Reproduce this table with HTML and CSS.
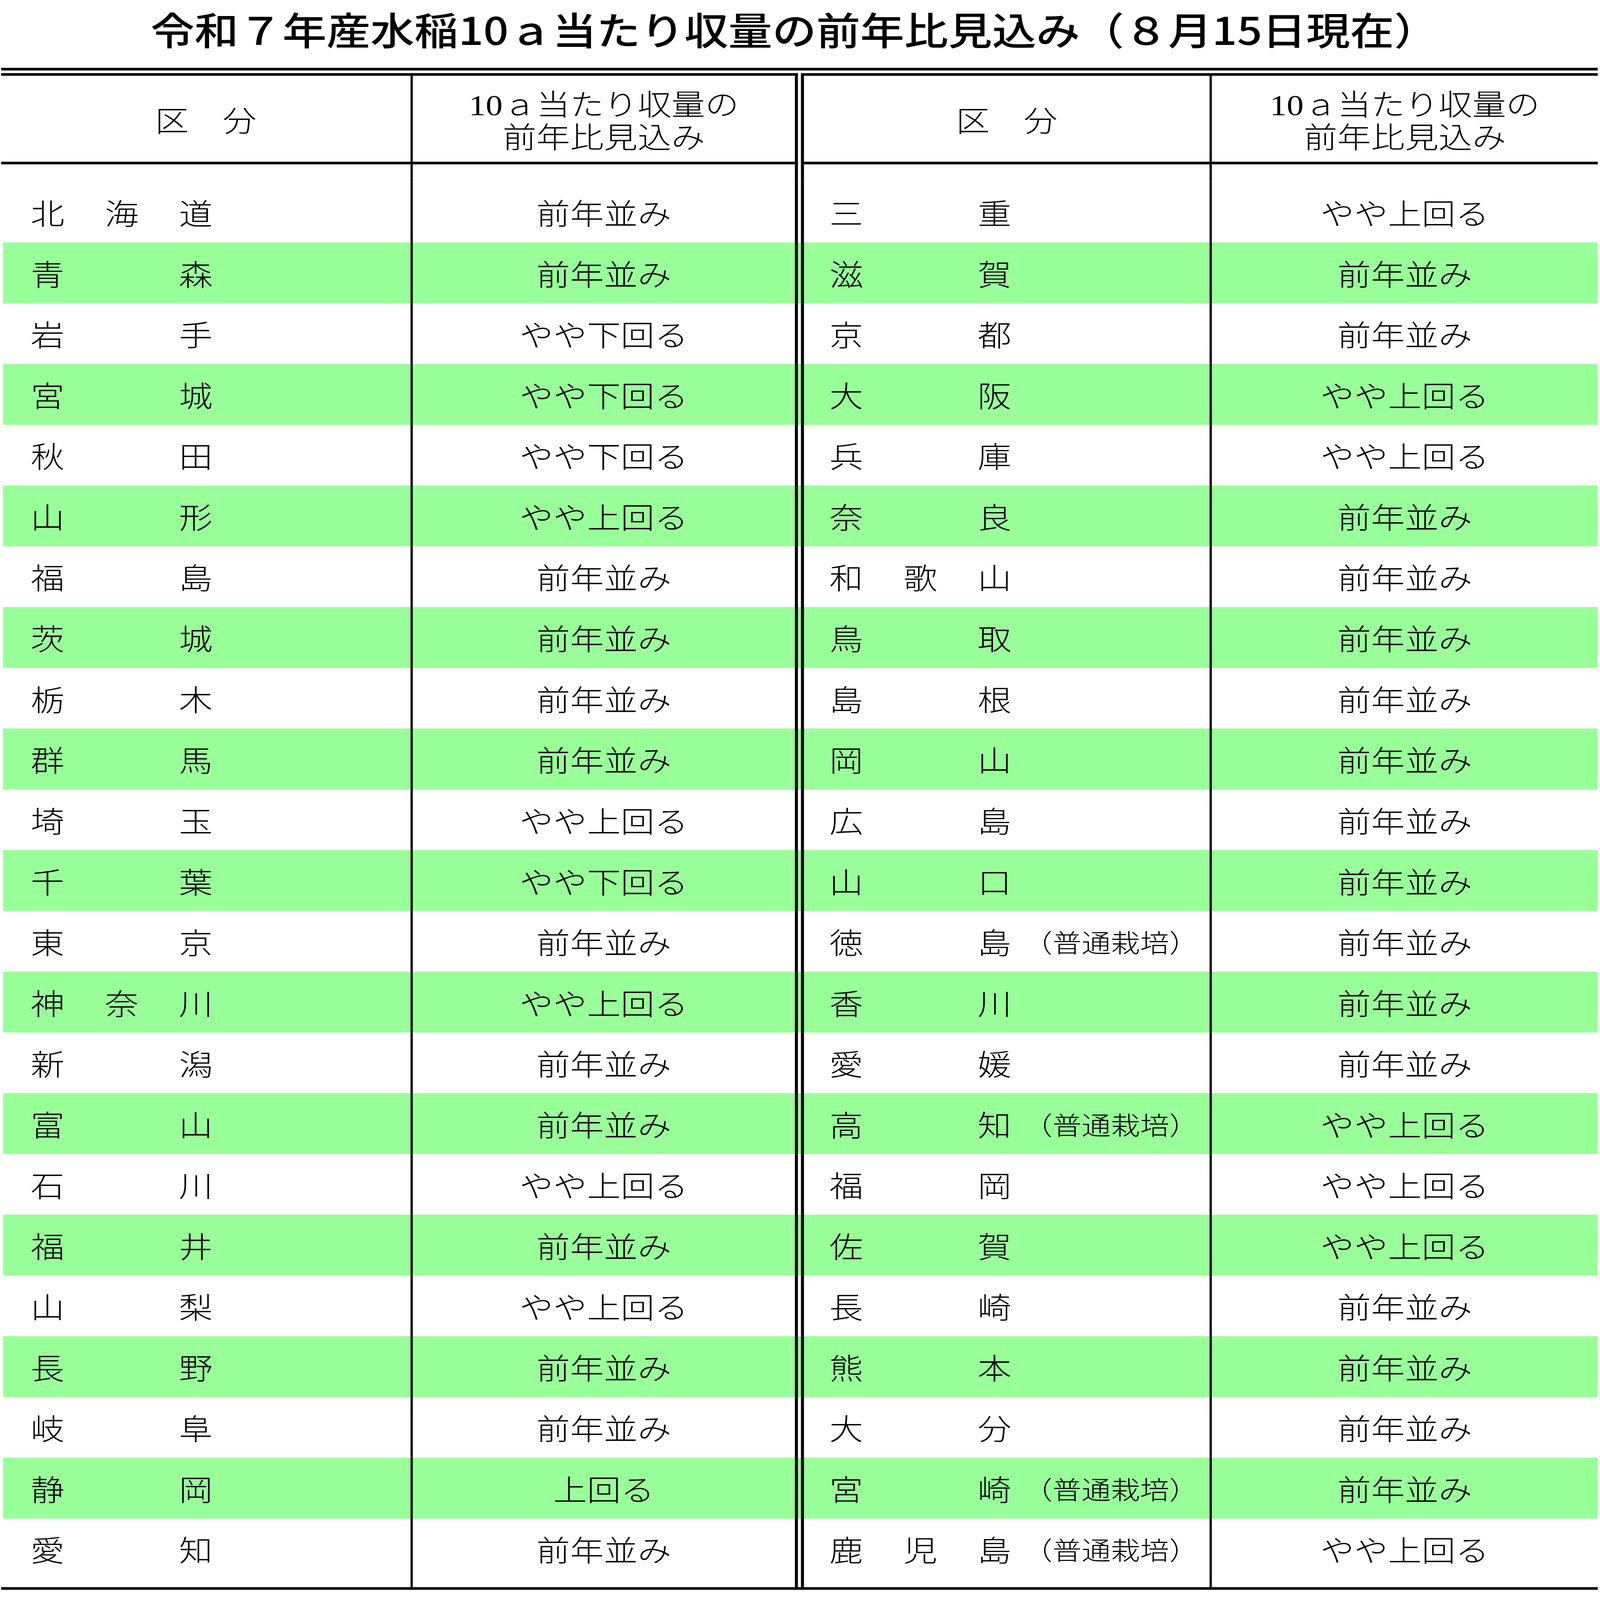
FILE: index.html
```html
<!DOCTYPE html>
<html lang="ja">
<head>
<meta charset="utf-8">
<title>令和７年産水稲10ａ当たり収量の前年比見込み</title>
<link rel="stylesheet" href="styles.css">
</head>
<body>
<main class="canvas">
<h1 class="title">令和７年産水稲10ａ当たり収量の前年比見込み（８月15日現在）</h1>
<div class="sheet">
  <div class="rule rule-top"></div>
  <div class="grid head">
    <div class="cell c1"><span class="htext">区　分</span></div>
    <div class="cell c2"><span class="htext"><span class="hline">10ａ当たり収量の</span><span class="hline">前年比見込み</span></span></div>
    <div class="cell gap"></div>
    <div class="cell c3"><span class="htext">区　分</span></div>
    <div class="cell c4"><span class="htext"><span class="hline">10ａ当たり収量の</span><span class="hline">前年比見込み</span></span></div>
  </div>
  <div class="grid spacer spacer-top">
    <div class="cell c1"></div><div class="cell c2"></div><div class="cell gap"></div><div class="cell c3"></div><div class="cell c4"></div>
  </div>

  <div class="grid row">
    <div class="cell c1"><span class="name"><span>北</span><span>海</span><span>道</span></span></div>
    <div class="cell c2 val">前年並み</div><div class="cell gap"></div>
    <div class="cell c3"><span class="name"><span>三</span><span>重</span></span></div>
    <div class="cell c4 val">やや上回る</div>
  </div>
  <div class="grid row alt">
    <div class="cell c1"><span class="name"><span>青</span><span>森</span></span></div>
    <div class="cell c2 val">前年並み</div><div class="cell gap"></div>
    <div class="cell c3"><span class="name"><span>滋</span><span>賀</span></span></div>
    <div class="cell c4 val">前年並み</div>
  </div>
  <div class="grid row">
    <div class="cell c1"><span class="name"><span>岩</span><span>手</span></span></div>
    <div class="cell c2 val">やや下回る</div><div class="cell gap"></div>
    <div class="cell c3"><span class="name"><span>京</span><span>都</span></span></div>
    <div class="cell c4 val">前年並み</div>
  </div>
  <div class="grid row alt">
    <div class="cell c1"><span class="name"><span>宮</span><span>城</span></span></div>
    <div class="cell c2 val">やや下回る</div><div class="cell gap"></div>
    <div class="cell c3"><span class="name"><span>大</span><span>阪</span></span></div>
    <div class="cell c4 val">やや上回る</div>
  </div>
  <div class="grid row">
    <div class="cell c1"><span class="name"><span>秋</span><span>田</span></span></div>
    <div class="cell c2 val">やや下回る</div><div class="cell gap"></div>
    <div class="cell c3"><span class="name"><span>兵</span><span>庫</span></span></div>
    <div class="cell c4 val">やや上回る</div>
  </div>
  <div class="grid row alt">
    <div class="cell c1"><span class="name"><span>山</span><span>形</span></span></div>
    <div class="cell c2 val">やや上回る</div><div class="cell gap"></div>
    <div class="cell c3"><span class="name"><span>奈</span><span>良</span></span></div>
    <div class="cell c4 val">前年並み</div>
  </div>
  <div class="grid row">
    <div class="cell c1"><span class="name"><span>福</span><span>島</span></span></div>
    <div class="cell c2 val">前年並み</div><div class="cell gap"></div>
    <div class="cell c3"><span class="name"><span>和</span><span>歌</span><span>山</span></span></div>
    <div class="cell c4 val">前年並み</div>
  </div>
  <div class="grid row alt">
    <div class="cell c1"><span class="name"><span>茨</span><span>城</span></span></div>
    <div class="cell c2 val">前年並み</div><div class="cell gap"></div>
    <div class="cell c3"><span class="name"><span>鳥</span><span>取</span></span></div>
    <div class="cell c4 val">前年並み</div>
  </div>
  <div class="grid row">
    <div class="cell c1"><span class="name"><span>栃</span><span>木</span></span></div>
    <div class="cell c2 val">前年並み</div><div class="cell gap"></div>
    <div class="cell c3"><span class="name"><span>島</span><span>根</span></span></div>
    <div class="cell c4 val">前年並み</div>
  </div>
  <div class="grid row alt">
    <div class="cell c1"><span class="name"><span>群</span><span>馬</span></span></div>
    <div class="cell c2 val">前年並み</div><div class="cell gap"></div>
    <div class="cell c3"><span class="name"><span>岡</span><span>山</span></span></div>
    <div class="cell c4 val">前年並み</div>
  </div>
  <div class="grid row">
    <div class="cell c1"><span class="name"><span>埼</span><span>玉</span></span></div>
    <div class="cell c2 val">やや上回る</div><div class="cell gap"></div>
    <div class="cell c3"><span class="name"><span>広</span><span>島</span></span></div>
    <div class="cell c4 val">前年並み</div>
  </div>
  <div class="grid row alt">
    <div class="cell c1"><span class="name"><span>千</span><span>葉</span></span></div>
    <div class="cell c2 val">やや下回る</div><div class="cell gap"></div>
    <div class="cell c3"><span class="name"><span>山</span><span>口</span></span></div>
    <div class="cell c4 val">前年並み</div>
  </div>
  <div class="grid row">
    <div class="cell c1"><span class="name"><span>東</span><span>京</span></span></div>
    <div class="cell c2 val">前年並み</div><div class="cell gap"></div>
    <div class="cell c3"><span class="name"><span>徳</span><span>島</span></span><span class="note">（普通栽培）</span></div>
    <div class="cell c4 val">前年並み</div>
  </div>
  <div class="grid row alt">
    <div class="cell c1"><span class="name"><span>神</span><span>奈</span><span>川</span></span></div>
    <div class="cell c2 val">やや上回る</div><div class="cell gap"></div>
    <div class="cell c3"><span class="name"><span>香</span><span>川</span></span></div>
    <div class="cell c4 val">前年並み</div>
  </div>
  <div class="grid row">
    <div class="cell c1"><span class="name"><span>新</span><span>潟</span></span></div>
    <div class="cell c2 val">前年並み</div><div class="cell gap"></div>
    <div class="cell c3"><span class="name"><span>愛</span><span>媛</span></span></div>
    <div class="cell c4 val">前年並み</div>
  </div>
  <div class="grid row alt">
    <div class="cell c1"><span class="name"><span>富</span><span>山</span></span></div>
    <div class="cell c2 val">前年並み</div><div class="cell gap"></div>
    <div class="cell c3"><span class="name"><span>高</span><span>知</span></span><span class="note">（普通栽培）</span></div>
    <div class="cell c4 val">やや上回る</div>
  </div>
  <div class="grid row">
    <div class="cell c1"><span class="name"><span>石</span><span>川</span></span></div>
    <div class="cell c2 val">やや上回る</div><div class="cell gap"></div>
    <div class="cell c3"><span class="name"><span>福</span><span>岡</span></span></div>
    <div class="cell c4 val">やや上回る</div>
  </div>
  <div class="grid row alt">
    <div class="cell c1"><span class="name"><span>福</span><span>井</span></span></div>
    <div class="cell c2 val">前年並み</div><div class="cell gap"></div>
    <div class="cell c3"><span class="name"><span>佐</span><span>賀</span></span></div>
    <div class="cell c4 val">やや上回る</div>
  </div>
  <div class="grid row">
    <div class="cell c1"><span class="name"><span>山</span><span>梨</span></span></div>
    <div class="cell c2 val">やや上回る</div><div class="cell gap"></div>
    <div class="cell c3"><span class="name"><span>長</span><span>崎</span></span></div>
    <div class="cell c4 val">前年並み</div>
  </div>
  <div class="grid row alt">
    <div class="cell c1"><span class="name"><span>長</span><span>野</span></span></div>
    <div class="cell c2 val">前年並み</div><div class="cell gap"></div>
    <div class="cell c3"><span class="name"><span>熊</span><span>本</span></span></div>
    <div class="cell c4 val">前年並み</div>
  </div>
  <div class="grid row">
    <div class="cell c1"><span class="name"><span>岐</span><span>阜</span></span></div>
    <div class="cell c2 val">前年並み</div><div class="cell gap"></div>
    <div class="cell c3"><span class="name"><span>大</span><span>分</span></span></div>
    <div class="cell c4 val">前年並み</div>
  </div>
  <div class="grid row alt">
    <div class="cell c1"><span class="name"><span>静</span><span>岡</span></span></div>
    <div class="cell c2 val">上回る</div><div class="cell gap"></div>
    <div class="cell c3"><span class="name"><span>宮</span><span>崎</span></span><span class="note">（普通栽培）</span></div>
    <div class="cell c4 val">前年並み</div>
  </div>
  <div class="grid row">
    <div class="cell c1"><span class="name"><span>愛</span><span>知</span></span></div>
    <div class="cell c2 val">前年並み</div><div class="cell gap"></div>
    <div class="cell c3"><span class="name"><span>鹿</span><span>児</span><span>島</span></span><span class="note">（普通栽培）</span></div>
    <div class="cell c4 val">やや上回る</div>
  </div>

  <div class="grid spacer spacer-bottom">
    <div class="cell c1"></div><div class="cell c2"></div><div class="cell gap"></div><div class="cell c3"></div><div class="cell c4"></div>
  </div>
  <div class="rule"></div>
</div>
</main>
<script src="fit.js"></script>
</body>
</html>
```

FILE: styles.css
```css
:root {
  --sx: 0.970386;
  --sy: 0.843145;
}

html, body {
  margin: 0;
  padding: 0;
  background: #ffffff;
  overflow: hidden;
}

body {
  width: 100vw;
  height: 100vh;
  color: #000000;
  font-family: "Noto Sans CJK JP", "Noto Sans", sans-serif;
}

/* the sheet is drawn on a 4221 x 4858 canvas and fitted to the window */
.canvas {
  display: block;
  width: 4221px;
  height: 4858px;
  overflow: hidden;
  transform-origin: 0 0;
  transform: scale(var(--sx), var(--sy));
}

.title {
  margin: 0;
  padding-top: 27px;
  height: 116px;
  font-size: 116px;
  line-height: 116px;
  font-weight: 500;
  text-align: center;
  white-space: nowrap;
  padding-right: 30px;
}

.sheet {
  margin: 63px 6px 0 3px;
}

.rule {
  height: 8px;
  background: #000000;
}

.rule-top {
  margin-bottom: 8px;
}

.grid {
  display: grid;
  grid-template-columns: 1086px 1016px 8px 1084px 1018px;
}

.cell {
  box-sizing: border-box;
  min-width: 0;
}

.c1 {
  border-right: 6px solid #000000;
}

.c2 {
  border-right: 8px solid #000000;
}

.c3 {
  border-left: 8px solid #000000;
  border-right: 6px solid #000000;
}

.head .cell {
  height: 277px;
  display: flex;
  align-items: center;
  justify-content: center;
  text-align: center;
  font-family: "Liberation Serif", "Noto Sans CJK JP", serif;
  font-size: 89px;
  line-height: 100px;
  font-weight: 300;
  white-space: nowrap;
}

.htext {
  display: flex;
  flex-direction: column;
  align-items: center;
  margin-top: 18px;
}

.hline {
  display: block;
  height: 100px;
}

.head .c1,
.head .c2,
.head .c3,
.head .c4 {
  border-top: 8px solid #000000;
  border-bottom: 8px solid #000000;
}

.spacer-top {
  height: 52.5px;
}

.spacer-bottom {
  height: 24px;
}

.row {
  height: 184.5px;
}

.row.alt {
  background: linear-gradient(#99ff99, #99ff99) 5px 0 / calc(100% - 5px) 100% no-repeat;
}

.row .cell {
  display: flex;
  align-items: center;
  font-size: 89px;
  line-height: 1;
  font-weight: 300;
  white-space: nowrap;
}

.row .c1 {
  padding-left: 78px;
}

.row .c3 {
  padding-left: 67px;
}

.row .val {
  justify-content: center;
}

.name {
  display: flex;
  justify-content: space-between;
  width: 480px;
  flex: none;
}

.note {
  margin-left: 70px;
  font-size: 77px;
  font-feature-settings: "halt";
}
```

FILE: fit.js
```js
(function () {
  var w = window.innerWidth || document.documentElement.clientWidth;
  var h = window.innerHeight || document.documentElement.clientHeight;
  if (w > 0 && h > 0) {
    var root = document.documentElement;
    root.style.setProperty('--sx', String(w / 4221));
    root.style.setProperty('--sy', String(h / 4858));
  }
})();
```
